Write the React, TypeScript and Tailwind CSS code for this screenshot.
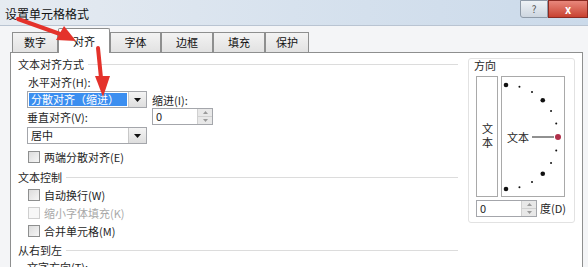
import type { ReactNode } from "react";

const font = { fontFamily: '"Noto Sans CJK SC", "Noto Sans", sans-serif' };

function Checkbox({ label, disabled }: { label: string; disabled?: boolean }) {
  return (
    <div className="flex items-center h-[18px]">
      <span
        className={
          disabled
            ? "w-[12px] h-[12px] border border-[#cfcfcf] bg-[#f7f7f7]"
            : "w-[12px] h-[12px] border border-[#8e8f8f] bg-gradient-to-br from-[#dcdcdc] to-[#f6f6f6]"
        }
      />
      <span className={disabled ? "ml-[4px] text-[#a8a8a8]" : "ml-[4px] text-[#1e1e1e]"}>{label}</span>
    </div>
  );
}

function Combo({ children, selected }: { children: ReactNode; selected?: boolean }) {
  return (
    <div className="flex w-[120px] h-[17px] border border-[#a4a6ab] bg-white">
      <div className="flex-1 p-[1px]">
        <div
          className={
            selected
              ? "h-full bg-[#3b8ef0] text-white flex items-center pl-[2px]"
              : "h-full flex items-center pl-[2px] text-[#1e1e1e]"
          }
        >
          {children}
        </div>
      </div>
      <div className="w-[18px] border-l border-[#c8c8c8] bg-gradient-to-b from-[#f4f4f4] to-[#dedede] flex items-center justify-center">
        <svg width="7" height="4" viewBox="0 0 7 4">
          <path d="M0 0h7L3.5 4z" fill="#111" />
        </svg>
      </div>
    </div>
  );
}

function Spin({ w }: { w: string }) {
  return (
    <div className={`flex h-[17px] border border-[#a4a6ab] bg-white ${w}`}>
      <div className="flex-1 pl-[3px] flex items-center text-[#1e1e1e]">0</div>
      <div className="w-[15px] flex flex-col bg-[#e8e8e8] border-l border-[#d0d0d0]">
        <div className="flex-1 flex items-center justify-center border-b border-[#d0d0d0]">
          <svg width="5" height="3" viewBox="0 0 5 3">
            <path d="M0 3h5L2.5 0z" fill="#9a9a9a" />
          </svg>
        </div>
        <div className="flex-1 flex items-center justify-center">
          <svg width="5" height="3" viewBox="0 0 5 3">
            <path d="M0 0h5L2.5 3z" fill="#9a9a9a" />
          </svg>
        </div>
      </div>
    </div>
  );
}

function Heading({ text }: { text: string }) {
  return (
    <div className="flex items-center h-[16px] text-[#1e1e1e]">
      <span>{text}</span>
      <span className="flex-1 ml-[4px] h-px bg-[#dcdcdc]" />
    </div>
  );
}

const tabs = [
  { name: "数字", w: "w-[46px]" },
  { name: "对齐", w: "w-[52px]", active: true },
  { name: "字体", w: "w-[51px]" },
  { name: "边框", w: "w-[52px]" },
  { name: "填充", w: "w-[52px]" },
  { name: "保护", w: "w-[44px]" },
];

function Orientation() {
  const cx = 506;
  const cy = 137;
  const r = 52;
  const dots = [90, 75, 60, 45, 30, 15, 0, -15, -30, -45, -60, -75, -90];
  return (
    <svg width="62" height="120" viewBox="502 77 62 120" className="block">
      {dots.map((a) => {
        const rad = (a * Math.PI) / 180;
        const x = cx + r * Math.cos(rad);
        const y = cy - r * Math.sin(rad);
        if (a === 0) return <circle key={a} cx={x} cy={y} r="3" fill="#b0304a" />;
        const big = a % 45 === 0;
        return <circle key={a} cx={x} cy={y} r={big ? 2.3 : 1} fill="#111" />;
      })}
      <line x1="532" y1="137" x2="554" y2="137" stroke="#222" strokeWidth="1" />
    </svg>
  );
}

export default function App() {
  return (
    <div className="relative w-[588px] h-[267px] overflow-hidden bg-[#f4f5f7] text-[11px] leading-none" style={font}>
      {/* title bar */}
      <div className="h-[26px] flex items-start border-b border-[#b9c4d2] bg-gradient-to-r from-[#e6ebf1] via-[#d7e2ee] to-[#cbdaea]">
        <div className="pl-[5px] pt-[8px] text-[12px] text-[#111]">设置单元格格式</div>
        <div className="flex-1" />
        <div className="w-[28px] h-[18px] border border-[#8e9aa8] rounded-bl-[3px] bg-gradient-to-b from-[#eef2f6] to-[#cdd6e0] flex items-center justify-center text-[10px] text-[#555]">
          ?
        </div>
        <div className="w-[40px] h-[18px] border border-[#8a2a22] bg-gradient-to-b from-[#e8877c] to-[#c8402f] flex items-center justify-center text-white text-[11px] font-bold">
          x
        </div>
      </div>

      {/* tabs */}
      <div className="flex items-end h-[26px] pl-[12px]">
        {tabs.map((t) =>
          t.active ? (
            <div
              key={t.name}
              className={`${t.w} h-[25px] -mb-px z-10 bg-white border border-b-0 border-[#8e8f8f] rounded-t-[2px] flex items-center justify-center text-[#111]`}
            >
              {t.name}
            </div>
          ) : (
            <div
              key={t.name}
              className={`${t.w} h-[20px] bg-gradient-to-b from-[#f3f3f3] to-[#e2e2e2] border border-b-0 border-[#8e8f8f] flex items-center justify-center text-[#111]`}
            >
              {t.name}
            </div>
          )
        )}
      </div>

      {/* panel */}
      <div className="ml-[10px] mr-[5px] h-[230px] bg-white border border-[#8e8f8f] flex">
        <div className="w-[457px] pl-[7px] pr-[10px] pt-[3px]">
          <Heading text="文本对齐方式" />
          <div className="pl-[10px]">
            <div className="h-[18px] flex items-center mt-[1px] text-[#1e1e1e]">水平对齐(H):</div>
            <div className="flex">
              <div className="-ml-[1px]">
                <Combo selected>分散对齐（缩进）</Combo>
                <div className="h-[19px] flex items-center text-[#1e1e1e]">垂直对齐(V):</div>
                <Combo>居中</Combo>
              </div>
              <div className="ml-[5px] pt-[2px]">
                <div className="h-[15px] flex items-center text-[#1e1e1e]">缩进(I):</div>
                <Spin w="w-[61px]" />
              </div>
            </div>
            <div className="mt-[4px]">
              <Checkbox label="两端分散对齐(E)" />
            </div>
          </div>
          <div className="mt-[3px]">
            <Heading text="文本控制" />
          </div>
          <div className="pl-[10px] mt-[1px]">
            <Checkbox label="自动换行(W)" />
            <Checkbox label="缩小字体填充(K)" disabled />
            <Checkbox label="合并单元格(M)" />
          </div>
          <div className="mt-[2px]">
            <Heading text="从右到左" />
          </div>
          <div className="pl-[9px] h-[18px] flex items-center text-[#1e1e1e]">文字方向(T):</div>
        </div>

        {/* orientation group */}
        <div className="mt-[5px] w-[107px] h-[165px] border border-[#e2e2e2] rounded-[3px] px-[7px]">
          <div className="h-[13px] pt-[1px] -ml-[2px] text-[#1e1e1e]">方向</div>
          <div className="flex gap-[3px] mt-[4px]">
            <div className="w-[22px] h-[121px] border border-[#a9a9a9] flex items-center justify-center text-[#1e1e1e]">
              <span className="[writing-mode:vertical-rl] [text-orientation:upright] tracking-[3px] leading-none">文本</span>
            </div>
            <div className="relative w-[64px] h-[121px] border border-[#a9a9a9]">
              <span className="absolute left-[5px] top-[55px] text-[#1e1e1e]">文本</span>
              <Orientation />
            </div>
          </div>
          <div className="flex items-center mt-[3px]">
            <Spin w="w-[61px]" />
            <span className="ml-[3px] text-[#1e1e1e]">度(D)</span>
          </div>
        </div>
      </div>

      {/* red annotation arrows */}
      <svg className="absolute left-0 top-0 z-20 pointer-events-none" width="588" height="267">
        <line x1="18" y1="19" x2="60" y2="34" stroke="#e4322b" strokeWidth="4" strokeLinecap="round" />
        <path d="M76 41 L56 40 L64 26 Z" fill="#e4322b" />
        <line x1="98" y1="48" x2="101" y2="78" stroke="#e4322b" strokeWidth="4" strokeLinecap="round" />
        <path d="M95 76 L110 76 L103 97 Z" fill="#e4322b" />
      </svg>
    </div>
  );
}
